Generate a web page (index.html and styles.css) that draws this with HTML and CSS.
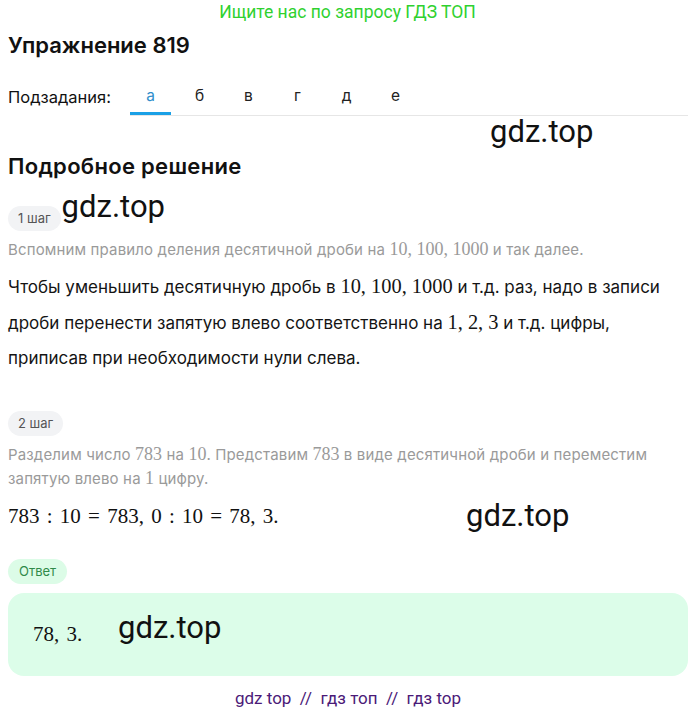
FILE: index.html
```html
<!DOCTYPE html>
<html lang="ru">
<head>
<meta charset="utf-8">
<link rel="stylesheet" href="styles.css">
</head>
<body>
<div class="banner">Ищите нас по запросу ГДЗ ТОП</div>
<main class="page">
  <h1 class="title">Упражнение 819</h1>
  <div class="subtasks">
    <span class="sub-label">Подзадания:</span>
    <div class="tabs">
      <span class="tab active">а</span>
      <span class="tab">б</span>
      <span class="tab">в</span>
      <span class="tab">г</span>
      <span class="tab">д</span>
      <span class="tab">е</span>
    </div>
  </div>
  <div class="wm-row wm-right1"><span class="wm">gdz.top</span></div>
  <h2 class="section">Подробное решение</h2>
  <div class="step-head">
    <span class="pill">1 шаг</span><span class="wm">gdz.top</span>
  </div>
  <p class="hint">Вспомним правило деления десятичной дроби на <span class="m">10, 100, 1000</span> и так далее.</p>
  <p class="text">Чтобы уменьшить десятичную дробь в <span class="m">10, 100, 1000</span> и т.д. раз, надо в записи дроби перенести запятую влево соответственно на <span class="m">1, 2, 3</span> и т.д. цифры, приписав при необходимости нули слева.</p>
  <div class="step-head step2">
    <span class="pill">2 шаг</span>
  </div>
  <p class="hint hint2">Разделим число <span class="m">783</span> на <span class="m">10</span>. Представим <span class="m">783</span> в виде десятичной дроби и переместим запятую влево на <span class="m">1</span> цифру.</p>
  <div class="formula-row">
    <span class="formula">783 : 10 = 783, 0 : 10 = 78, 3.</span>
    <span class="wm">gdz.top</span>
  </div>
  <span class="pill pill-green">Ответ</span>
  <div class="answer">
    <span class="formula">78, 3.</span>
    <span class="wm">gdz.top</span>
  </div>
  <div class="footer">gdz top&nbsp; //&nbsp; гдз топ&nbsp; //&nbsp; гдз top</div>
</main>
</body>
</html>
```
FILE: styles.css
```css
* { box-sizing: border-box; }
html, body { margin: 0; padding: 0; background: #fff; }
body { font-family: Inter, "Noto Sans", sans-serif; color: #111; }

.banner {
  text-align: center;
  color: #2fd12f;
  font-family: Roboto, "Liberation Sans", sans-serif;
  font-size: 17.5px;
  line-height: 24px;
  height: 24px;
}

.page { padding: 0 7px 0 8px; }

.title {
  margin: 7px 0 0;
  font-size: 22px;
  font-weight: 600;
  line-height: 28px;
}

.subtasks {
  display: flex;
  align-items: flex-end;
  margin-top: 27px;
}
.sub-label {
  font-size: 16.5px;
  line-height: 20px;
  padding-bottom: 9px;
  width: 122px;
  flex: none;
}
.tabs {
  display: flex;
  gap: 8px;
  flex: 1;
  border-bottom: 1px solid #e6e6e6;
}
.tab {
  width: 41px;
  text-align: center;
  font-size: 15.5px;
  line-height: 20px;
  padding-bottom: 9px;
  color: #222;
}
.tab.active {
  color: #2f8ecb;
  box-shadow: inset 0 -3px 0 #1aa0e6;
}

.wm {
  font-family: Roboto, "Liberation Sans", sans-serif;
  font-size: 31px;
  line-height: 32px;
  color: #111;
}
.wm-row { display: flex; }
.wm-right1 { padding-left: 482px; height: 32px; }

.section {
  margin: 4px 0 0;
  font-size: 22px;
  font-weight: 600;
  line-height: 28px;
  letter-spacing: 0.3px;
}

.step-head {
  display: flex;
  align-items: flex-end;
  margin-top: 11px;
}
.pill {
  display: inline-block;
  background: #f2f3f5;
  color: #555;
  font-size: 13px;
  line-height: 25px;
  height: 25px;
  padding: 0 10px;
  border-radius: 13px;
}
.step-head .wm { margin-left: 1px; margin-bottom: 8px; }

.hint {
  margin: 7px 0 0;
  color: #9a9a9a;
  font-size: 15px;
  line-height: 24px;
  letter-spacing: 0.15px;
}
.text {
  margin: 8px 0 0;
  font-size: 17px;
  line-height: 35.5px;
  color: #141414;
}
.m {
  font-family: "Liberation Serif", "DejaVu Serif", serif;
  font-size: 1.2em;
  line-height: 1;
  letter-spacing: 0;
}

.step2 { margin-top: 34px; }
.hint2 { margin-top: 7px; }

.formula-row {
  display: flex;
  align-items: center;
  margin-top: 10px;
  height: 30px;
}
.formula {
  font-family: "Liberation Serif", "DejaVu Serif", serif;
  font-size: 21px;
  line-height: 30px;
  word-spacing: 2px;
  color: #111;
}
.formula-row .formula { width: 458px; flex: none; }

.pill-green {
  margin-top: 28px;
  padding: 0 11px;
  background: #dcfce7;
  color: #2f8a4a;
}

.answer {
  margin-top: 9px;
  background: #dcfde9;
  border-radius: 16px;
  height: 83px;
  display: flex;
  align-items: center;
  padding-left: 25px;
}
.answer .formula { width: 85px; flex: none; }
.answer .wm { margin-top: -12px; }

.footer {
  text-align: center;
  margin-top: 10px;
  font-family: Roboto, "Liberation Sans", sans-serif;
  font-size: 17px;
  line-height: 24px;
  color: #4b1a78;
}
```
